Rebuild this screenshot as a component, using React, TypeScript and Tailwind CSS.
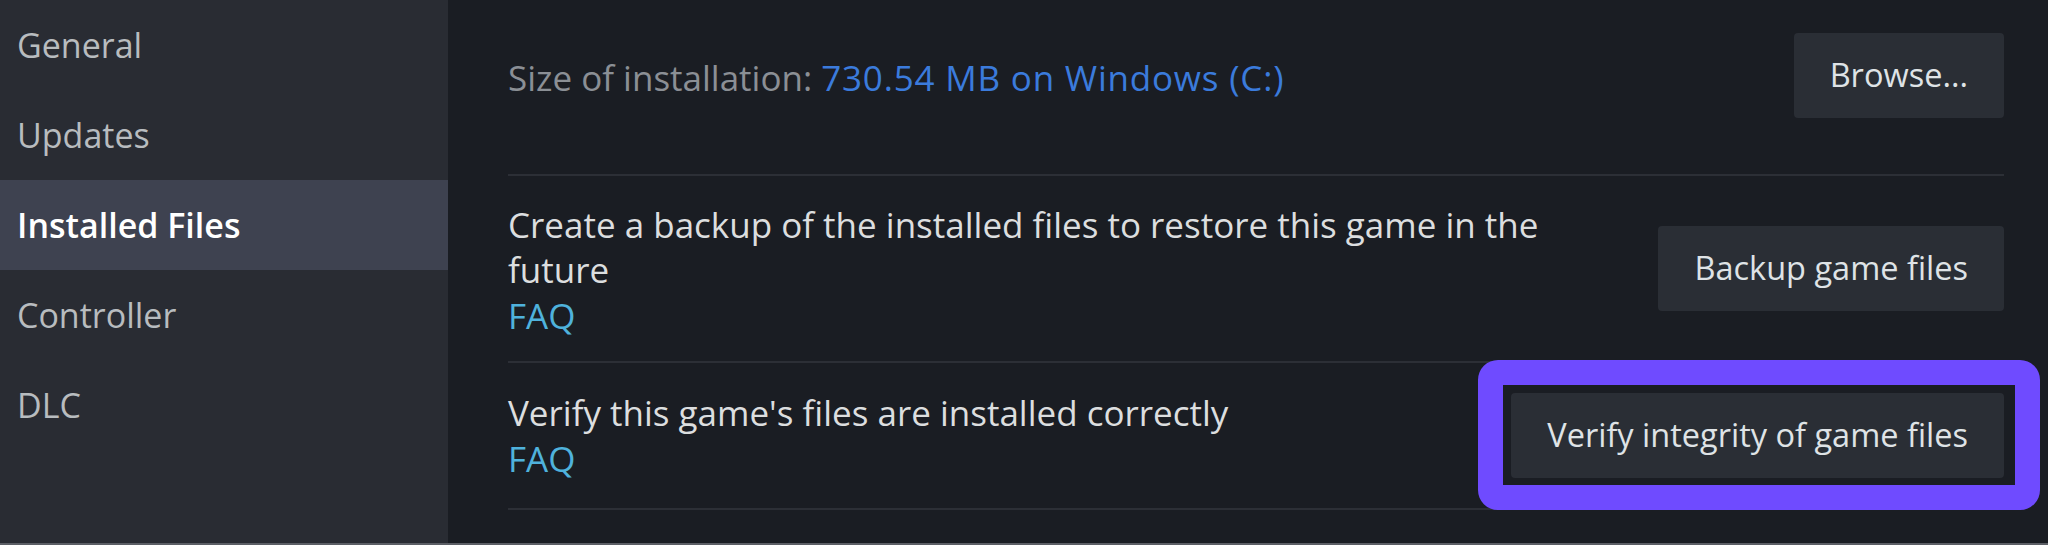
import React from "react";

const navItems = ["General", "Updates", "Installed Files", "Controller", "DLC"];

function Button({ label }: { label: string }) {
  return (
    <button className="h-[85px] shrink-0 rounded-[4px] bg-[#2a2e35] px-[36px] text-[32.5px] leading-none text-[#dfe3e6] whitespace-nowrap">
      {label}
    </button>
  );
}

export default function App() {
  return (
    <div className="relative flex h-[545px] w-[2048px] flex-col overflow-hidden bg-[#1a1d23] font-['Open_Sans',sans-serif]">
      <div className="flex flex-1">
        <nav className="flex w-[448px] shrink-0 flex-col bg-[#292c33]">
          {navItems.map((item) => {
            const active = item === "Installed Files";
            return (
              <div
                key={item}
                className={
                  active
                    ? "flex h-[90px] items-center bg-[#3e4250] pl-[17px] text-[34px] font-semibold text-white"
                    : "flex h-[90px] items-center pl-[17px] text-[34px] text-[#b8bcbf]"
                }
              >
                {item}
              </div>
            );
          })}
        </nav>

        <main className="flex flex-1 flex-col pl-[60px] pr-[44px]">
          <div className="flex items-center justify-between pt-[33px] pb-[56px]">
            <div className="pt-[5px] text-[35px] leading-[45.5px] text-[#8b8f95]">
              Size of installation:{" "}
              <span className="tracking-[0.8px] text-[#3b7bdc]">730.54 MB on Windows (C:)</span>
            </div>
            <Button label="Browse..." />
          </div>
          <div className="h-[2px] bg-[#2c2f36]" />

          <div className="flex items-center justify-between gap-[20px] py-[22.5px]">
            <div className="max-w-[1090px] pt-[3px] text-[35px] leading-[45.5px] text-[#dcdedf]">
              <div>
                Create a backup of the installed files to restore this game in the future
              </div>
              <div className="text-[#4fb2dc]">FAQ</div>
            </div>
            <Button label="Backup game files" />
          </div>
          <div className="h-[2px] bg-[#2c2f36]" />

          <div className="flex items-center justify-between gap-[20px] py-[26.5px]">
            <div className="pt-[1px] text-[35px] leading-[45.5px] text-[#dcdedf]">
              <div>Verify this game's files are installed correctly</div>
              <div className="text-[#4fb2dc]">FAQ</div>
            </div>
            <Button label="Verify integrity of game files" />
          </div>
          <div className="h-[2px] bg-[#2c2f36]" />
        </main>
      </div>
      <div className="h-[2px] bg-[#5c5f66]" />

      <div className="pointer-events-none absolute left-[1478px] top-[360px] h-[150px] w-[562px] rounded-[20px] border-[25px] border-[#6f4bff]" />
    </div>
  );
}
